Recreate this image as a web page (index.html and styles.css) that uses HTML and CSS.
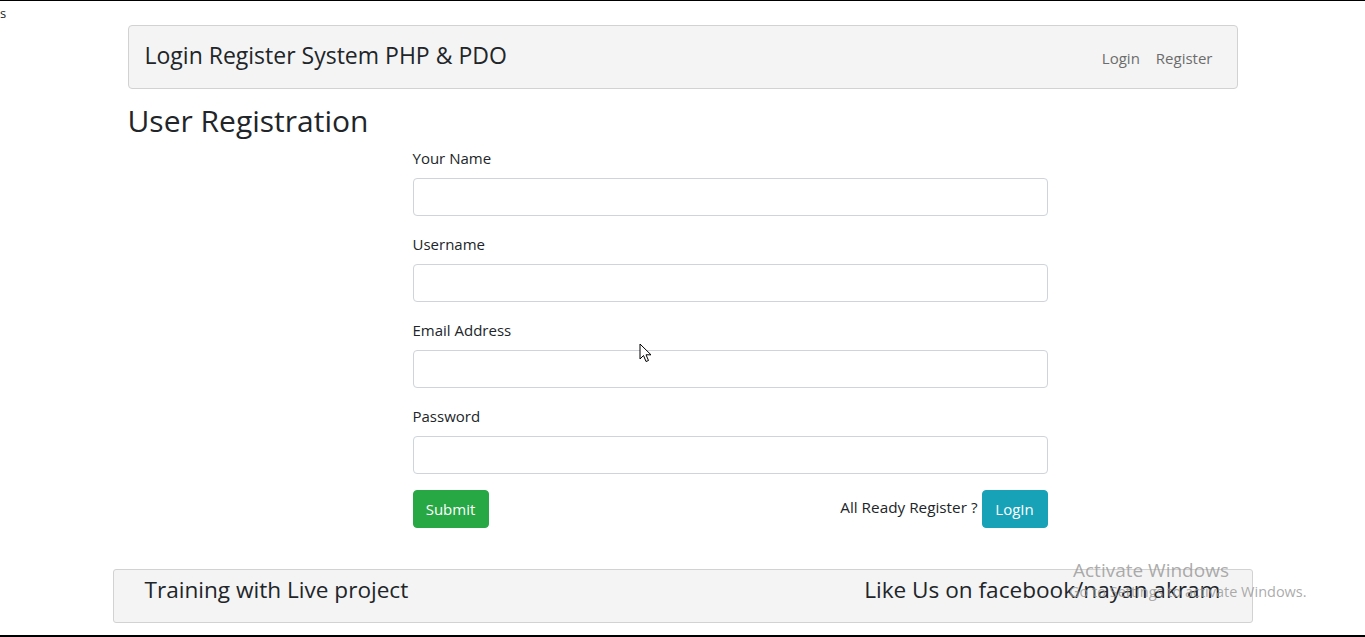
FILE: index.html
```html
<!DOCTYPE html>
<html>
<head>
<meta charset="utf-8">
<title>User Registration</title>
<link rel="stylesheet" href="styles.css">
</head>
<body>
<div class="topline"></div>
<div class="stray">s</div>
<div class="container">
  <nav class="navbar">
    <span class="brand">Login Register System PHP &amp; PDO</span>
    <div class="nav-links">
      <a class="nav-link" href="#">Login</a>
      <a class="nav-link" href="#">Register</a>
    </div>
  </nav>
  <h2 class="page-title">User Registration</h2>
  <form class="reg-form">
    <div class="form-group">
      <label class="form-label">Your Name</label>
      <input class="form-control" type="text">
    </div>
    <div class="form-group">
      <label class="form-label">Username</label>
      <input class="form-control" type="text">
    </div>
    <div class="form-group">
      <label class="form-label">Email Address</label>
      <input class="form-control" type="email">
    </div>
    <div class="form-group">
      <label class="form-label">Password</label>
      <input class="form-control" type="password">
    </div>
    <div class="form-actions">
      <button class="btn btn-success" type="button">Submit</button>
      <div class="already">
        <span class="already-text">All Ready Register ?</span>
        <button class="btn btn-info" type="button">LogIn</button>
      </div>
    </div>
  </form>
</div>
<footer class="footer">
  <span class="footer-text">Training with Live project</span>
  <span class="footer-text">Like Us on facebook/nayan akram</span>
</footer>
<div class="bottomline"></div>
<div class="watermark">
  <div class="wm-title">Activate Windows</div>
  <div class="wm-sub">Go to Settings to activate Windows.</div>
</div>
<svg class="cursor" width="14" height="22" viewBox="0 0 14 22"><path d="M1 1 L1 16 L4.5 12.5 L7 18.5 L9.5 17.5 L7 11.8 L12 11.8 Z" fill="#fff" stroke="#000" stroke-width="1"/></svg>
</body>
</html>
```
FILE: styles.css
```css
* { box-sizing: border-box; }
html, body { margin: 0; padding: 0; }
body {
  font-family: "Open Sans", "Noto Sans", sans-serif;
  color: #212529;
  background: #fff;
  position: relative;
  min-height: 637px;
}
.topline { height: 1px; background: #000; }
.stray { font-size: 13px; line-height: 24px; height: 24px; padding-left: 0; color: #222; }
.container { width: 1110px; margin: 0 auto; }
.navbar {
  display: flex;
  justify-content: space-between;
  align-items: center;
  height: 64px;
  background: #f4f4f4;
  border: 1px solid #d2d2d2;
  border-radius: 4px;
  padding: 0 24px 0 16px;
}
.brand { font-size: 23px; color: #212529; margin-top: -5px; }
.nav-links { display: flex; gap: 16px; margin-top: 2px; }
.nav-link { font-size: 15px; color: #6c6c6c; text-decoration: none; }
.page-title { font-size: 30px; font-weight: 400; margin: 13px 0 6px; line-height: 38px; }
.reg-form { width: 635px; margin-left: 285px; }
.form-group { margin-bottom: 16px; }
.form-label { display: block; font-size: 15px; line-height: 24px; margin-bottom: 8px; }
.form-control {
  display: block; width: 100%; height: 38px;
  border: 1px solid #ced4da; border-radius: 4px;
  background: #fff; padding: 6px 12px; font-size: 16px;
}
.form-actions { display: flex; justify-content: space-between; align-items: center; }
.btn {
  height: 38px; border: 1px solid transparent; border-radius: 4px;
  color: #fff; font-family: inherit; font-size: 15px; padding: 0 12px;
}
.btn-success { background: #28a745; border-color: #28a745; width: 76px; }
.btn-info { background: #17a2b8; border-color: #17a2b8; width: 66px; }
.already { display: flex; align-items: center; gap: 4px; }
.already-text { font-size: 15.3px; margin-top: -4px; }
.footer {
  width: 1140px; margin: 41px auto 0;
  height: 54px;
  background: #f4f4f4; border: 1px solid #d2d2d2; border-radius: 3px;
  display: flex; justify-content: space-between;
  padding: 4px 31px 0 31px;
}
.footer-text { font-size: 22.6px; line-height: 32px; }
.bottomline { height: 2px; background: #000; margin-top: 12px; }
.watermark { position: absolute; left: 1073px; top: 558px; color: rgba(150,150,150,0.8); }
.wm-title { font-size: 19px; line-height: 24px; }
.wm-sub { font-size: 14.5px; line-height: 20px; margin-left: -4px; }
.cursor { position: absolute; left: 639px; top: 343px; }
```
